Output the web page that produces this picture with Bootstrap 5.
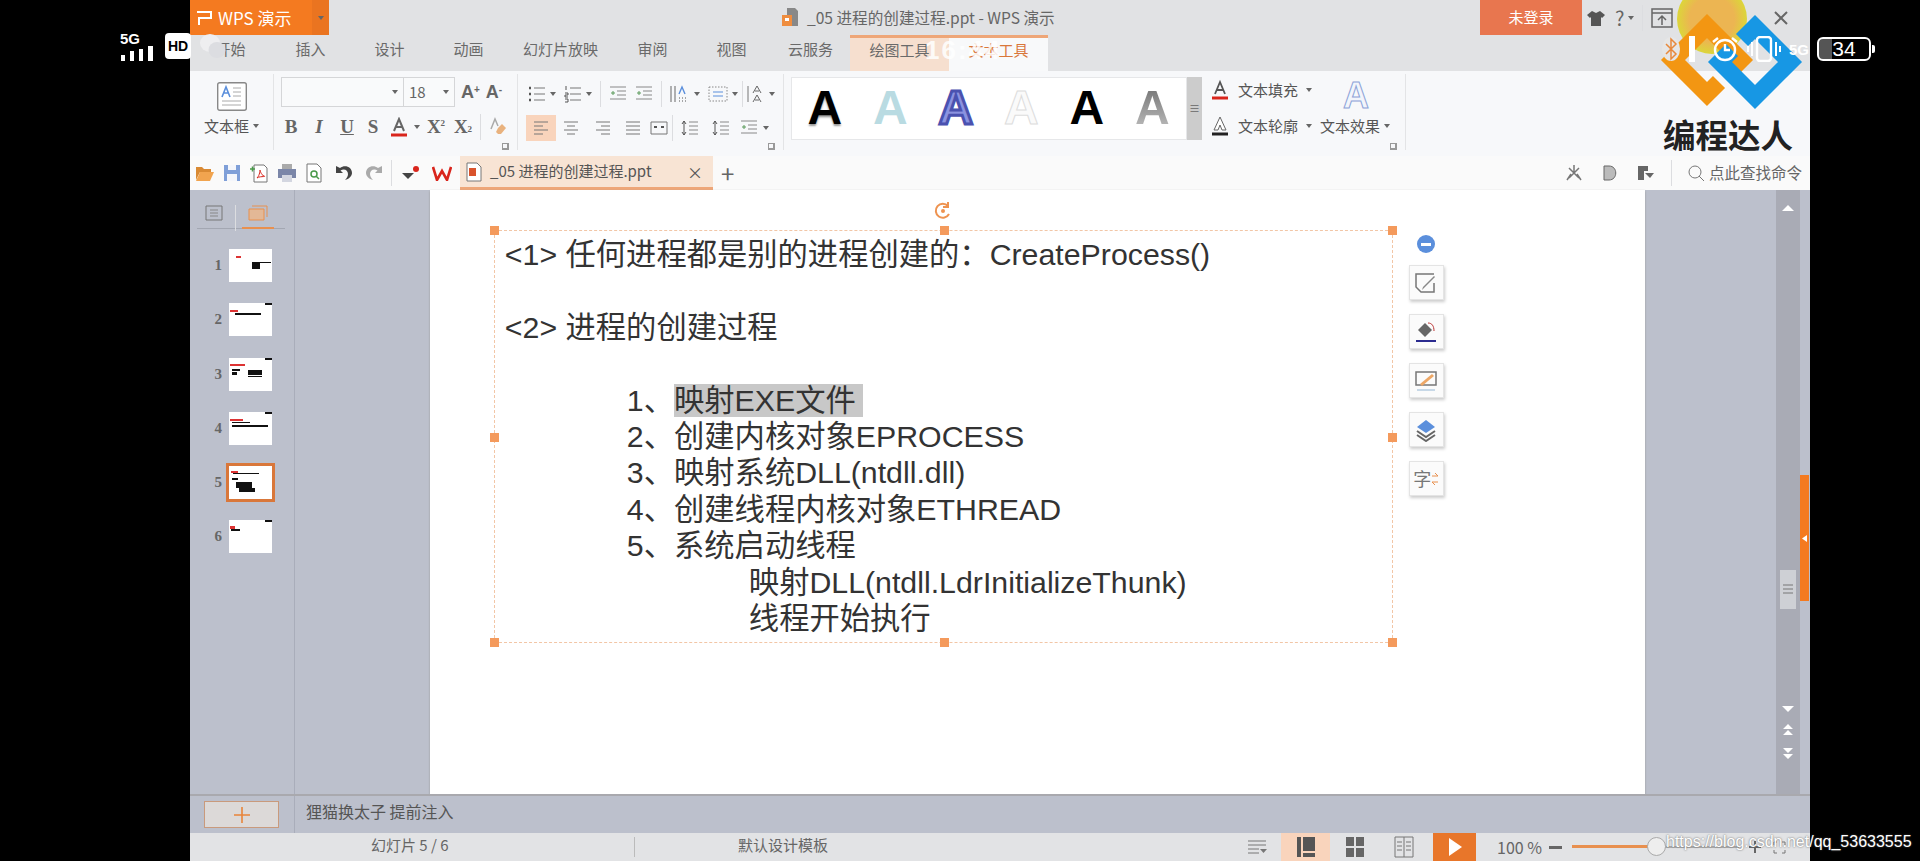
<!DOCTYPE html>
<html lang="zh-CN">
<head>
<meta charset="UTF-8">
<title>_05 进程的创建过程.ppt - WPS 演示</title>
<link href="https://cdn.jsdelivr.net/npm/bootstrap@5.3.3/dist/css/bootstrap.min.css" rel="stylesheet">
<style>
html, body { height: 100%; }
body { background: #000; font-family: "Noto Sans CJK SC", "Liberation Sans", sans-serif; font-size: 14px; color: #666; overflow: hidden; position: relative; }
svg { display: block; flex: none; }
.app { width: 1620px; height: 861px; margin-left: 190px; background: #e2e3e5; }
.titlebar { height: 71px; background: #e1e2e4; }
.toprow { height: 35px; }
.wps-btn { width: 139px; height: 35px; background: #f47a20; color: #fff; font-size: 17px; }
.wps-main { width: 122px; padding-left: 6px; white-space: nowrap; }
.wps-arrow { width: 17px; background: #ea7420; justify-content: center; }
.doc-title { margin-left: 452px; width: 274px; color: #666; font-size: 15.6px; white-space: nowrap; }
.login-btn { width: 102px; height: 35px; background: #e8764f; color: #fff; font-size: 15px; margin-left: 425px; }
.top-tools { width: 228px; }
.shirt { margin-left: 5px; }
.help { font-size: 20px; margin-left: 10px; }
.min-bar { width: 6px; height: 2px; background: #666; margin-left: 23px; }
.max-box { margin-left: 20px; }
.close-x { margin-left: 28px; }
.rtabs { height: 36px; flex-wrap: nowrap; }
.rtab { width: 79px; height: 36px; padding: 3px 0 0; text-align: center; color: #6a6a6a; font-size: 15px; white-space: nowrap; }
.rtab-first { width: 81px; }
.rtab-wide { width: 105px; }
.rtab-tool { width: 99px; border-top: 3px solid #eea678; background: #f6dfcf; padding-top: 1px; }
.rtab-on { background: #f8f9fa; color: #d9773a; }
.ribbon { height: 85px; background: #f7f8fa; }
.rgroup { border-right: 1px solid #e3e4e6; height: 76px; margin-top: 3px; position: relative; }
.g-box { width: 84px; }
.g-font { width: 244px; padding-top: 3px; }
.g-para { width: 266px; padding-top: 5px; }
.g-style { width: 426px; padding: 3px 0 0 7px; border: 0; }
.g-text { width: 196px; padding-top: 1px; }
.rlabel { font-size: 15px; color: #555; white-space: nowrap; }
.rrow { height: 30px; }
.rrow2 { height: 30px; margin-top: 6px; }
.g-para .rrow2 { margin-top: 4px; }
.g-font .rrow2 { margin-top: 5px; }
.fontbox { width: 174px; height: 30px; margin-left: 7px; border: 1px solid #d5d6d8; background: #f9fafb; }
.fontname { width: 122px; border-right: 1px solid #d5d6d8; justify-content: flex-end; padding-right: 5px; }
.fontsize { font-size: 15px; width: 50px; padding-left: 5px; justify-content: space-between; padding-right: 5px; }
.font-grow { margin-left: 6px; font: 700 18px "Liberation Sans", sans-serif; }
.font-grow sup { font-size: 10px; }
.cell { height: 26px; justify-content: center; color: #666; font-family: "Liberation Serif", serif; font-size: 19px; font-weight: 700; }
.c10 { width: 10px; } .c14 { width: 14px; } .c26 { width: 26px; } .c28 { width: 28px; } .c30 { width: 30px; } .c34 { width: 34px; }
.cell sup, .cell sub { font-size: 9px; }
.vsep { width: 1px; height: 26px; background: #dcdde0; flex: none; }
.align-on { background: #f9d4bc; }
.drop { width: 0; height: 0; border-left: 3px solid transparent; border-right: 3px solid transparent; border-top: 4px solid #666; flex: none; }
.expander { position: absolute; right: 8px; bottom: 0; width: 7px; height: 7px; border: 1px solid #999; border-right-width: 2px; border-bottom-width: 2px; }
.gallery { width: 396px; height: 63px; background: #fff; border: 1px solid #e6e7e9; }
.gal-a { width: 65.5px; text-align: center; font: 700 48px/60px "Liberation Sans", sans-serif; }
.a-black { color: #000; text-shadow: 0 2px 2px #999; }
.a-teal { color: #b9dbe2; }
.a-blue { color: #8b93e0; -webkit-text-stroke: 3px #4a52b0; }
.a-white { color: #fafafa; -webkit-text-stroke: 1px #ddd; }
.a-plain { color: #000; }
.a-grey { background: linear-gradient(#666, #ccc); -webkit-background-clip: text; background-clip: text; color: transparent; }
.gal-scroll { width: 15px; height: 63px; background: #ccc; justify-content: center; color: #666; font-size: 11px; }
.a-fx { position: absolute; left: 110px; top: 2px; width: 64px; padding-left: 23px; font: 700 36px/40px "Liberation Sans", sans-serif; color: #f2f5fb; -webkit-text-stroke: 1px #8ca3d8; }
.fx-label { position: absolute; left: 110px; top: 41px; }
.qat { height: 34px; background: #fafafa; }
.qat-icons { padding-left: 5px; width: 212px; }
.doc-tab { width: 253px; height: 34px; background: #f8e4d4; border-bottom: 3px solid #eea678; padding: 0 6px; color: #555; font-size: 15px; white-space: nowrap; }
.qat-right { font-size: 15.5px; color: #666; white-space: nowrap; }
.workspace { height: 604px; background: #bcc0cc; }
.thumbs { width: 105px; border-right: 1px solid #a9adba; }
.thumb-head { height: 39px; margin: 0 9px 0 7px; padding-top: 15px; border-bottom: 1px solid #a3a7b2; position: relative; }
.thumb-mark { position: absolute; left: 45px; width: 32px; bottom: -1px; height: 2px; background: #e8904f; }
.thumb-row { height: 33px; margin-top: 21.3px; justify-content: flex-end; padding-right: 22px; gap: 7px; font: 700 15px "Liberation Serif", serif; color: #666; }
.thumb-head + .thumb-row { margin-top: 20px; }
.thumb-pic { width: 43px; height: 33px; background: #fff; }
.thumb-on { outline: 3px solid #d9773a; outline-offset: 0; }
.slide-gutter { width: 135px; }
.slide { width: 1216px; background: #fff; padding: 40px 0 0 64px; box-shadow: 0 1px 2px #999; }
.frame { width: 899px; height: 413px; border: 1px dashed #f2c6a6; padding: 6px 0 0 10px; position: relative; flex: none; font: 30.3px/36.4px "Liberation Sans", "Noto Sans CJK SC", sans-serif; color: #333; white-space: nowrap; }
.lvl2 { padding-left: 122px; }
.lvl3 { padding-left: 244px; }
.hl { background: #c8c8c8; padding: 0 7px 0 0; }
.handle { position: absolute; width: 9px; height: 9px; background: #f49a5c; }
.h-l { left: -5px; } .h-c { left: 445px; } .h-r { right: -5px; }
.h-t { top: -5px; } .h-m { top: 202px; } .h-b { bottom: -5px; }
.rotate { position: absolute; left: 438px; top: -30px; }
.sidetools { margin: 5px 0 0 16px; gap: 14px; align-items: center; }
.minus-dot { width: 18px; height: 18px; border-radius: 50%; background: #5b8fdc; margin-bottom: -2px; justify-content: center; }
.minus-dot span { width: 10px; height: 3px; background: #fff; }
.tool-box { width: 35px; height: 35px; background: #fbfbfb; border: 1px solid #e4e4e4; box-shadow: 1px 2px 3px #ccc; justify-content: center; color: #777; font-size: 18px; }
.gray-right { width: 131px; }
.vscroll { width: 24px; background: #a9abb5; padding-top: 14px; position: relative; }
.vthumb { position: absolute; left: 4px; top: 380px; width: 16px; height: 39px; background: #ced0d5; }
.vbtns-bottom { position: absolute; left: 0; top: 515px; width: 24px; gap: 11px; }
.edge { width: 10px; position: relative; }
.edge-tab { position: absolute; left: 0; top: 285px; width: 9px; height: 126px; background: #f47a20; justify-content: center; }
.notes { height: 39px; background: #bcc0cc; border-top: 2px solid #a9a9ae; }
.notes-add { width: 105px; border-right: 1px solid #a9adba; padding-left: 14px; padding-top: 5px; }
.add-btn { width: 75px; height: 27px; background: #dcd9d8; border: 1px solid #c99a7c; justify-content: center; }
.notes-text { padding: 0 0 8px 11px; font-size: 16px; color: #555; }
.statusbar { height: 28px; background: #e2e3e5; font-size: 15px; color: #666; }
.st-count { width: 444px; padding: 0 0 4px 181px; white-space: nowrap; }
.st-tpl { width: 598px; padding-left: 103px; border-left: 1px solid #bbb; height: 20px; line-height: 16px; white-space: nowrap; }
.st-view { width: 49px; height: 28px; justify-content: center; }
.st-view-on { background: #f9d4bc; }
.st-play { width: 43px; height: 28px; background: #e8762a; justify-content: center; margin-left: 5px; }
.zoom-pct { margin-left: 21px; font-size: 16px; white-space: nowrap; }
.zoom-minus { width: 13px; height: 3px; background: #666; margin-left: 7px; }
.zoom-track { width: 167px; height: 2px; background: #aaa; position: relative; margin-left: 10px; }
.zoom-fill { position: absolute; left: 0; top: -1px; height: 3px; width: 84px; background: #e8904f; }
.zoom-knob { position: absolute; left: 75px; top: -9px; width: 19px; height: 19px; border-radius: 50%; background: #eee; border: 1px solid #aaa; }
.zoom-plus { margin-left: 10px; }
.zoom-full { margin-left: 12px; }
.phone-l, .phone-r, .logo-mark, .logo-name, .cursor-glow, .clock, .watermark { position: absolute; }
.cursor-glow { left: 1677px; top: -16px; width: 70px; height: 70px; border-radius: 50%; background: radial-gradient(circle, #ecb552 0 45%, #dcd53a 70%); }
.logo-mark { left: 1655px; top: 8px; }
.logo-name { left: 1663px; top: 114px; font-size: 32.5px; line-height: 40px; font-weight: 700; color: #222; white-space: nowrap; }
.phone-l { left: 120px; top: 31px; gap: 9px; color: #fff; }
.sig { font: 700 15px/15px "Liberation Sans", sans-serif; }
.hd { width: 26px; height: 26px; background: #fff; border-radius: 4px; color: #000; font: 700 14px/26px "Liberation Sans", sans-serif; text-align: center; }
.clock { left: 925px; top: 33px; color: rgba(255,255,255,.85); font: 700 26px/34px "Liberation Sans", sans-serif; letter-spacing: 2px; }
.phone-r { left: 1661px; top: 36px; gap: 8px; color: #fff; }
.batt { width: 54px; height: 24px; border: 2px solid #fff; border-radius: 6px; color: #fff; font: 21px/20px "Liberation Sans", sans-serif; text-align: center; position: relative; background: linear-gradient(90deg, #555 26%, #000 26%); }
.batt-nub { position: absolute; right: -6px; top: 6px; width: 3px; height: 8px; background: #fff; border-radius: 0 2px 2px 0; }
.watermark { left: 1666px; top: 829px; font: 16px/26px "Liberation Sans", sans-serif; color: #fff; text-shadow: 0 0 2px #555; white-space: nowrap; }
</style>
</head>
<body>
<svg width="0" height="0" class="position-absolute">
  <symbol id="s-list" viewBox="0 0 18 18"><path d="M1 3h2M1 9h2M1 15h2" stroke="#555" stroke-width="2.4"/><path d="M6 3h11M6 9h11M6 15h11" stroke="#777"/></symbol>
  <symbol id="s-num" viewBox="0 0 18 18"><path d="M2 1v4M1 8h3v2H1v2h3M1 14h3v3H1" fill="none" stroke="#555"/><path d="M6 3h11M6 9h11M6 15h11" stroke="#777"/></symbol>
  <symbol id="s-indent" viewBox="0 0 18 18"><path d="M1 2h16M8 6h9M8 10h9M1 14h16" stroke="#888"/><path d="M2 8h4M4 6v4" stroke="#5a9a5a"/></symbol>
  <symbol id="s-left" viewBox="0 0 18 18"><path d="M2 3h14M2 7h9M2 11h14M2 15h9" stroke="#777"/></symbol>
  <symbol id="s-center" viewBox="0 0 18 18"><path d="M2 3h14M5 7h8M2 11h14M5 15h8" stroke="#777"/></symbol>
  <symbol id="s-right" viewBox="0 0 18 18"><path d="M2 3h14M7 7h9M2 11h14M7 15h9" stroke="#777"/></symbol>
  <symbol id="s-just" viewBox="0 0 18 18"><path d="M2 3h14M2 7h14M2 11h14M2 15h14" stroke="#777"/></symbol>
  <symbol id="s-dist" viewBox="0 0 18 18"><path d="M1 3h16M1 15h16M1 3v12M17 3v12" stroke="#777"/><path d="M4 8h3M11 8h3" stroke="#555" stroke-width="2"/></symbol>
  <symbol id="s-space" viewBox="0 0 18 18"><path d="M3 2v14M1 5l2-3 2 3M1 13l2 3 2-3" fill="none" stroke="#555"/><path d="M8 3h9M8 7h9M8 11h9M8 15h9" stroke="#888"/></symbol>
  <symbol id="s-cols" viewBox="0 0 20 18"><path d="M1 1v16M5 1v16" stroke="#666"/><path d="M9 9l3-7 3 7" fill="none" stroke="#5b8fdc" stroke-width="1.400"/><path d="M9 13h1M12 13h1M15 13h1M9 16h1M12 16h1M15 16h1" stroke="#555"/></symbol>
  <symbol id="s-dash" viewBox="0 0 20 18"><path d="M1 2h18v14H1z" fill="none" stroke="#888" stroke-dasharray="1.500 1.500"/><path d="M5 7h10M5 11h10" stroke="#5b8fdc"/></symbol>
  <symbol id="s-aa" viewBox="0 0 18 18"><path d="M1 1v16" stroke="#777"/><path d="M6 8l4-7 4 7M6 17l4-7 4 7M8 6h4M8 15h4" fill="none" stroke="#666"/></symbol>
</svg>

<div class="app d-flex flex-column">
  <header class="titlebar">
    <div class="toprow d-flex align-items-center">
      <div class="wps-btn d-flex">
        <div class="wps-main d-flex align-items-center gap-1">
          <svg width="18" height="18" viewBox="0 0 18 18"><path d="M1 3h14v6H3v7" fill="none" stroke="#fff" stroke-width="2"/></svg>
          <span>WPS 演示</span>
        </div>
        <div class="wps-arrow d-flex align-items-center"><span class="drop"></span></div>
      </div>
      <div class="doc-title d-flex align-items-center gap-2">
        <svg width="18" height="20" viewBox="0 0 18 20"><path d="M6 1h8l3 3v15H6z" fill="#888"/><path d="M1 8h10v11H1z" fill="#ef8d3f"/><path d="M4 11h4v3H4z" fill="#fff"/></svg>
        <span>_05 进程的创建过程.ppt - WPS 演示</span>
      </div>
      <div class="login-btn d-flex align-items-center justify-content-center">未登录</div>
      <div class="top-tools d-flex align-items-center">
        <svg class="shirt" width="18" height="18" viewBox="0 0 18 18"><path d="M5 2l4 2 4-2 5 4-3 3-1-1v9H4V8L3 9 0 6z" fill="#555"/></svg>
        <span class="help">?</span><span class="drop ms-1"></span>
        <span class="vsep ms-2"></span>
        <svg class="ms-2" width="22" height="20" viewBox="0 0 22 20"><path d="M1 1h20v18H1zM1 5h20M11 17V8M7 12l4-4 4 4" fill="none" stroke="#666" stroke-width="1.5"/></svg>
        <span class="vsep ms-2"></span>
        <span class="min-bar"></span>
        <svg class="max-box" width="15" height="14" viewBox="0 0 15 14"><path d="M1 2h13v11H1z" fill="none" stroke="#666" stroke-width="2"/></svg>
        <svg class="close-x" width="14" height="14" viewBox="0 0 14 14"><path d="M1 1l12 12M13 1L1 13" stroke="#666" stroke-width="2"/></svg>
      </div>
    </div>
    <nav class="nav rtabs">
      <a class="nav-link rtab rtab-first">开始</a>
      <a class="nav-link rtab">插入</a>
      <a class="nav-link rtab">设计</a>
      <a class="nav-link rtab">动画</a>
      <a class="nav-link rtab rtab-wide">幻灯片放映</a>
      <a class="nav-link rtab">审阅</a>
      <a class="nav-link rtab">视图</a>
      <a class="nav-link rtab">云服务</a>
      <a class="nav-link rtab rtab-tool">绘图工具</a>
      <a class="nav-link rtab rtab-tool rtab-on">文本工具</a>
    </nav>
  </header>

  <section class="ribbon d-flex">
    <div class="rgroup g-box d-flex flex-column align-items-center pt-2">
      <svg width="30" height="29" viewBox="0 0 30 29"><rect x=".7" y=".7" width="28.6" height="27.6" rx="2" fill="#fff" stroke="#888" stroke-width="1.4"/><path d="M5 15l4-10 4 10M6.500 11h5" fill="none" stroke="#5b8fdc" stroke-width="1.600"/><path d="M16 6h8M16 10h8M16 14h8M5 19h19M5 23h19" stroke="#aaa"/></svg>
      <div class="rlabel d-flex align-items-center gap-1 mt-1">文本框<span class="drop"></span></div>
    </div>
    <div class="rgroup g-font">
      <div class="d-flex align-items-center">
        <div class="fontbox d-flex">
          <div class="fontname d-flex align-items-center"><span class="drop"></span></div>
          <div class="fontsize d-flex align-items-center">18<span class="drop"></span></div>
        </div>
        <span class="font-grow">A<sup>+</sup></span>
        <span class="font-grow">A<sup>-</sup></span>
      </div>
      <div class="rrow2 d-flex align-items-center">
        <div class="cell c26 d-flex align-items-center ms-1">B</div>
        <div class="cell c30 d-flex align-items-center fst-italic">I</div>
        <div class="cell c26 d-flex align-items-center text-decoration-underline">U</div>
        <div class="cell c26 d-flex align-items-center">S</div>
        <div class="cell c26 d-flex align-items-center">
          <svg width="18" height="20" viewBox="0 0 18 20"><path d="M4 14L9 2l5 12M6 10h6" fill="none" stroke="#666" stroke-width="2"/><path d="M1 18h16" stroke="#d9251c" stroke-width="3"/></svg>
        </div>
        <div class="cell c10 d-flex align-items-center"><span class="drop"></span></div>
        <div class="cell c28 d-flex align-items-center">X<sup>2</sup></div>
        <div class="cell c26 d-flex align-items-center">X<sub>2</sub></div>
        <span class="vsep ms-1"></span>
        <div class="cell c26 d-flex align-items-center ms-1">
          <svg width="20" height="20" viewBox="0 0 20 20"><path d="M3 12L7 2l3 7" fill="none" stroke="#aaa" stroke-width="1.500"/><path d="M10 11l4-4 4 4-5 6h-3l-2-2z" fill="#e9b27e"/></svg>
        </div>
      </div>
      <span class="expander"></span>
    </div>
    <div class="rgroup g-para">
      <div class="rrow d-flex align-items-center">
        <div class="c10"></div>
        <svg width="18" height="18"><use href="#s-list"/></svg><span class="drop ms-1"></span>
        <svg class="ms-2" width="18" height="18"><use href="#s-num"/></svg><span class="drop ms-1"></span>
        <span class="vsep ms-2"></span>
        <svg class="ms-2" width="18" height="18"><use href="#s-indent"/></svg>
        <svg class="ms-2" width="18" height="18"><use href="#s-indent"/></svg>
        <span class="vsep ms-2"></span>
        <svg class="ms-2" width="20" height="18"><use href="#s-cols"/></svg><span class="drop ms-1"></span>
        <svg class="ms-2" width="20" height="18"><use href="#s-dash"/></svg><span class="drop ms-1"></span>
        <span class="vsep ms-1"></span>
        <svg class="ms-1" width="18" height="18"><use href="#s-aa"/></svg><span class="drop ms-1"></span>
      </div>
      <div class="rrow2 d-flex align-items-center">
        <div class="cell c30 d-flex align-items-center align-on ms-2"><svg width="18" height="18"><use href="#s-left"/></svg></div>
        <div class="cell c30 d-flex align-items-center"><svg width="18" height="18"><use href="#s-center"/></svg></div>
        <div class="cell c34 d-flex align-items-center"><svg width="18" height="18"><use href="#s-right"/></svg></div>
        <div class="cell c26 d-flex align-items-center"><svg width="18" height="18"><use href="#s-just"/></svg></div>
        <div class="cell c26 d-flex align-items-center"><svg width="18" height="18"><use href="#s-dist"/></svg></div>
        <span class="vsep"></span>
        <div class="cell c34 d-flex align-items-center"><svg width="18" height="18"><use href="#s-space"/></svg></div>
        <div class="cell c28 d-flex align-items-center"><svg width="18" height="18"><use href="#s-space"/></svg></div>
        <div class="cell c28 d-flex align-items-center"><svg width="18" height="18"><use href="#s-indent"/></svg></div>
        <span class="drop"></span>
      </div>
      <span class="expander"></span>
    </div>
    <div class="rgroup g-style d-flex">
      <div class="gallery d-flex">
        <span class="gal-a a-black">A</span>
        <span class="gal-a a-teal">A</span>
        <span class="gal-a a-blue">A</span>
        <span class="gal-a a-white">A</span>
        <span class="gal-a a-plain">A</span>
        <span class="gal-a a-grey">A</span>
      </div>
      <div class="gal-scroll d-flex align-items-center">≡</div>
    </div>
    <div class="rgroup g-text">
      <div class="rrow d-flex align-items-center gap-2 rlabel">
        <svg width="20" height="22" viewBox="0 0 20 22"><path d="M5 15L10 3l5 12M7 11h6" fill="none" stroke="#555" stroke-width="1.800"/><path d="M2 19h16" stroke="#d9251c" stroke-width="3"/></svg>
        文本填充<span class="drop"></span>
      </div>
      <div class="rrow2 d-flex align-items-center gap-2 rlabel">
        <svg width="20" height="22" viewBox="0 0 20 22"><path d="M4 15L10 2l6 13h-4l-2-5-2 5z" fill="#fff" stroke="#666"/><path d="M2 19h16" stroke="#222" stroke-width="3"/></svg>
        文本轮廓<span class="drop"></span>
      </div>
      <div class="a-fx">A</div>
      <div class="fx-label rlabel d-flex align-items-center gap-1">文本效果<span class="drop"></span></div>
      <span class="expander"></span>
    </div>
  </section>

  <section class="qat d-flex align-items-center">
    <div class="qat-icons d-flex align-items-center gap-2">
      <svg width="20" height="18" viewBox="0 0 20 18"><path d="M1 3h6l2 2h7v3H5L1 16z" fill="#d98a34"/><path d="M5 8h14l-4 9H1z" fill="#f1a44f"/></svg>
      <svg width="18" height="18" viewBox="0 0 18 18"><path d="M1 1h16v16H1z" fill="#7f9fd8"/><path d="M5 1h8v5H5zM4 10h10v7H4z" fill="#f4f6fb"/></svg>
      <svg width="20" height="20" viewBox="0 0 20 20"><path d="M5 2h10l3 3v14H5z" fill="#fff" stroke="#777"/><path d="M8 15c3-3 3-8 3-8s1 5 4 6-5 0-7 2z" fill="none" stroke="#d9251c"/><path d="M1 6h5M3.500 3.500v5" stroke="#4a9a4a" stroke-width="1.500"/></svg>
      <svg width="20" height="20" viewBox="0 0 20 20"><path d="M5 1h10v5H5z" fill="#aaa"/><path d="M1 6h18v9H1z" fill="#7b86a8"/><path d="M5 12h10v7H5z" fill="#d3d6e0"/></svg>
      <svg width="18" height="20" viewBox="0 0 18 20"><path d="M2 1h10l4 4v14H2z" fill="#fff" stroke="#777"/><circle cx="9" cy="11" r="3" fill="none" stroke="#4a9a4a" stroke-width="1.500"/><path d="M11 13l3 3" stroke="#4a9a4a" stroke-width="1.500"/></svg>
      <svg class="ms-1" width="18" height="16" viewBox="0 0 18 16"><path d="M1 1v7h7L5.500 5.500C9 3 13 5 13 9c0 2-1 4-3 6 4-1 7-4 7-7 0-6-7-9-12-5z" fill="#444"/></svg>
      <svg class="ms-1" width="18" height="16" viewBox="0 0 18 16"><path d="M17 1v7h-7l2.500-2.500C9 3 5 5 5 9c0 2 1 4 3 6-4-1-7-4-7-7 0-6 7-9 12-5z" fill="#aaa"/></svg>
      <span class="vsep"></span>
    </div>
    <svg width="18" height="14" viewBox="0 0 18 14" class="me-2"><path d="M0 7h12l-6 6z" fill="#444"/><circle cx="14" cy="3" r="3" fill="#d9251c"/></svg>
    <svg width="20" height="15" viewBox="0 0 20 15" class="ms-1 me-2"><path d="M1 1l4 13 5-9 5 9 4-13" fill="none" stroke="#d9251c" stroke-width="2.600"/></svg>
    <div class="doc-tab d-flex align-items-center">
      <svg width="16" height="20" viewBox="0 0 16 20" class="me-1"><path d="M1 1h10l4 4v14H1z" fill="#fff" stroke="#777"/><path d="M3 6h7v8H3z" fill="#d9532c"/></svg>
      <span class="ms-1">_05 进程的创建过程.ppt</span>
      <span class="ms-auto me-1 fs-6">×</span>
    </div>
    <span class="ms-2 fs-4 lh-1">+</span>
    <div class="qat-right d-flex align-items-center ms-auto pe-2 gap-3">
      <svg width="18" height="18" viewBox="0 0 18 18"><path d="M9 1v8M4 4l10 10M14 4L4 14M2 16l4-6M16 16l-4-6" stroke="#777" stroke-width="1.500"/></svg>
      <svg class="ms-1" width="14" height="16" viewBox="0 0 14 16"><path d="M1 1h5c9 0 9 14 0 14H1z" fill="#bbb" stroke="#666"/></svg>
      <svg class="ms-1" width="18" height="16" viewBox="0 0 18 16"><path d="M1 1h10v5H7v9H1z" fill="#666"/><path d="M8 8h9l-4 5z" fill="#666"/></svg>
      <span class="vsep"></span>
      <div class="d-flex align-items-center gap-1">
        <svg width="17" height="17" viewBox="0 0 17 17"><circle cx="7" cy="7" r="6" fill="none" stroke="#777"/><path d="M11 11l5 5" stroke="#777"/></svg>
        点此查找命令
      </div>
    </div>
  </section>

  <section class="workspace d-flex">
    <aside class="thumbs">
      <div class="thumb-head d-flex gap-2">
        <svg class="ms-2" width="18" height="16" viewBox="0 0 18 16"><path d="M1 1h16v14H1z" fill="none" stroke="#777"/><path d="M5 5h8M5 8h8M5 11h8" stroke="#888"/></svg>
        <span class="vsep ms-1"></span>
        <svg class="ms-1" width="20" height="16" viewBox="0 0 20 16"><path d="M4 1h15v11" fill="none" stroke="#e8904f"/><path d="M1 4h15v11H1z" fill="#e3b896" stroke="#e8904f"/></svg>
        <span class="thumb-mark"></span>
      </div>
      <div class="thumb-row d-flex align-items-center">1
        <svg class="thumb-pic" viewBox="0 0 43 33"><path d="M7 7h5v2H7z" fill="#d33"/><path d="M23 13h8v7h-8zM31 13h11v1H31z" fill="#111"/></svg>
      </div>
      <div class="thumb-row d-flex align-items-center">2
        <svg class="thumb-pic" viewBox="0 0 43 33"><path d="M36 0h7v2h-7zM6 10h26v2H6z" fill="#111"/><path d="M1 7h8v2H1z" fill="#d33"/></svg>
      </div>
      <div class="thumb-row d-flex align-items-center">3
        <svg class="thumb-pic" viewBox="0 0 43 33"><path d="M36 0h7v2h-7zM3 11h8v2H3zM3 14h5v3H3zM19 12h14v5H19zM19 18h14v1H19z" fill="#111"/><path d="M1 6h15v2H1z" fill="#d33"/></svg>
      </div>
      <div class="thumb-row d-flex align-items-center">4
        <svg class="thumb-pic" viewBox="0 0 43 33"><path d="M36 0h7v2h-7zM3 13h36v2H3zM3 10h18v1H3z" fill="#111"/><path d="M1 7h13v2H1z" fill="#d33"/></svg>
      </div>
      <div class="thumb-row d-flex align-items-center">5
        <svg class="thumb-pic thumb-on" viewBox="0 0 43 33"><path d="M4 7h26v1H4zM3 12h6v2H3zM7 16h16v6H7zM10 22h16v4H10z" fill="#111"/><path d="M2 5h7v2H2z" fill="#d33"/></svg>
      </div>
      <div class="thumb-row d-flex align-items-center">6
        <svg class="thumb-pic" viewBox="0 0 43 33"><path d="M36 0h7v2h-7zM2 9h9v2H2z" fill="#111"/><path d="M1 6h5v3H1z" fill="#d33"/></svg>
      </div>
    </aside>
    <div class="slide-gutter"></div>
    <main class="slide d-flex align-items-start">
      <div class="frame">
        <div>&lt;1&gt; 任何进程都是别的进程创建的：CreateProcess()</div>
        <div>&nbsp;</div>
        <div>&lt;2&gt; 进程的创建过程</div>
        <div>&nbsp;</div>
        <div class="lvl2">1、<span class="hl">映射EXE文件</span></div>
        <div class="lvl2">2、创建内核对象EPROCESS</div>
        <div class="lvl2">3、映射系统DLL(ntdll.dll)</div>
        <div class="lvl2">4、创建线程内核对象ETHREAD</div>
        <div class="lvl2">5、系统启动线程</div>
        <div class="lvl3">映射DLL(ntdll.LdrInitializeThunk)</div>
        <div class="lvl3">线程开始执行</div>
        <span class="handle h-l h-t"></span><span class="handle h-c h-t"></span><span class="handle h-r h-t"></span>
        <span class="handle h-l h-m"></span><span class="handle h-r h-m"></span>
        <span class="handle h-l h-b"></span><span class="handle h-c h-b"></span><span class="handle h-r h-b"></span>
        <svg class="rotate" width="20" height="20" viewBox="0 0 20 20"><path d="M15 5a7 7 0 1 0 1 8M15 1v5h-5" fill="none" stroke="#ee9350" stroke-width="2"/><circle cx="10" cy="10" r="2" fill="#ee9350"/></svg>
      </div>
      <div class="sidetools d-flex flex-column">
        <div class="minus-dot d-flex align-items-center"><span></span></div>
        <div class="tool-box d-flex align-items-center"><svg width="24" height="24" viewBox="0 0 24 24"><path d="M20 12v9H7l-5-5V3h18" fill="none" stroke="#777" stroke-width="1.500"/><path d="M21 6L10 17l-2 2 1-3L20 5z" fill="#888"/></svg></div>
        <div class="tool-box d-flex align-items-center"><svg width="24" height="24" viewBox="0 0 24 24"><path d="M4 10l7-7 7 7-7 7z" fill="#666"/><path d="M14 3c4 0 6 3 6 8" fill="none" stroke="#b33"/><path d="M2 21h20" stroke="#2b2b8f" stroke-width="2"/></svg></div>
        <div class="tool-box d-flex align-items-center"><svg width="24" height="24" viewBox="0 0 24 24"><path d="M2 3h20v13H2z" fill="none" stroke="#777" stroke-width="1.500"/><path d="M6 15L18 5l2 2L8 17z" fill="#eda766"/><path d="M3 21h18" stroke="#b6cde0" stroke-width="1.500"/></svg></div>
        <div class="tool-box d-flex align-items-center"><svg width="22" height="24" viewBox="0 0 22 24"><path d="M11 2l9 7-9 6-9-6z" fill="#5b8fdc"/><path d="M2 13l9 6 9-6M2 17l9 6 9-6" fill="none" stroke="#666" stroke-width="2"/></svg></div>
        <div class="tool-box d-flex align-items-center">字<svg width="8" height="14" viewBox="0 0 8 14"><path d="M1 4h6L4 1M7 10H1l3 3" fill="none" stroke="#e8904f"/></svg></div>
      </div>
    </main>
    <div class="gray-right"></div>
    <div class="vscroll">
      <svg class="mx-auto" width="12" height="8" viewBox="0 0 12 8"><path d="M6 1l6 6H0z" fill="#fff"/></svg>
      <div class="vthumb d-flex flex-column align-items-center justify-content-center gap-1"><svg width="10" height="11" viewBox="0 0 10 11"><path d="M0 1h10M0 5h10M0 9h10" stroke="#777"/></svg></div>
      <div class="vbtns-bottom d-flex flex-column align-items-center">
        <svg width="12" height="8" viewBox="0 0 12 8"><path d="M6 7l6-6H0z" fill="#fff"/></svg>
        <svg width="12" height="12" viewBox="0 0 12 12"><path d="M6 0l5 5H1zM6 6l5 5H1z" fill="#fff"/></svg>
        <svg width="12" height="12" viewBox="0 0 12 12"><path d="M6 6l5-5H1zM6 12l5-5H1z" fill="#fff"/></svg>
      </div>
    </div>
    <div class="edge">
      <div class="edge-tab d-flex align-items-center"><svg width="5" height="7" viewBox="0 0 5 7"><path d="M0 3.500L5 0v7z" fill="#fff"/></svg></div>
    </div>
  </section>

  <section class="notes d-flex">
    <div class="notes-add">
      <div class="add-btn d-flex align-items-center"><svg width="16" height="16" viewBox="0 0 16 16"><path d="M8 0v16M0 8h16" stroke="#e8843a" stroke-width="1.600"/></svg></div>
    </div>
    <div class="notes-text d-flex align-items-center">狸猫换太子 提前注入</div>
  </section>

  <footer class="statusbar d-flex align-items-center">
    <div class="st-count">幻灯片 5 / 6</div>
    <div class="st-tpl">默认设计模板</div>
    <div class="st-view d-flex align-items-center"><svg width="20" height="14" viewBox="0 0 20 14"><path d="M1 1h18M1 5h18M1 9h11M1 13h11" stroke="#777"/><path d="M13 9h7l-3.500 4z" fill="#777"/></svg></div>
    <div class="st-view st-view-on d-flex align-items-center"><svg width="20" height="22" viewBox="0 0 20 22"><path d="M1 1h4v20H1zM7 1h12v14H7zM7 17h12v4H7z" fill="#555"/></svg></div>
    <div class="st-view d-flex align-items-center"><svg width="20" height="22" viewBox="0 0 20 22"><path d="M1 1h8v9H1zM11 1h8v9h-8zM1 12h8v9H1zM11 12h8v9h-8z" fill="#666"/></svg></div>
    <div class="st-view d-flex align-items-center"><svg width="20" height="22" viewBox="0 0 20 22"><path d="M1 1h18v20H1zM10 1v20M3 6h5M3 10h5M3 14h5M12 6h5M12 10h5M12 14h5" fill="none" stroke="#777"/></svg></div>
    <div class="st-play d-flex align-items-center"><svg width="14" height="18" viewBox="0 0 14 18"><path d="M1 0l13 9-13 9z" fill="#fff"/></svg></div>
    <span class="zoom-pct">100 %</span>
    <span class="zoom-minus"></span>
    <div class="zoom-track"><span class="zoom-fill"></span><span class="zoom-knob"></span></div>
    <svg class="zoom-plus" width="12" height="12" viewBox="0 0 12 12"><path d="M6 0v12M0 6h12" stroke="#666" stroke-width="2"/></svg>
    <svg class="zoom-full" width="13" height="13" viewBox="0 0 13 13"><path d="M1 4V1h3M9 1h3v3M12 9v3H9M4 12H1V9" fill="none" stroke="#777"/></svg>
  </footer>
</div>

<div class="cursor-glow"></div>
<svg class="logo-mark" width="154" height="105" viewBox="1655 8 154 105">
  <path d="M1719 82l-12 12-34-34 34-34 34 34-10 10" fill="none" stroke="#f39612" stroke-width="17"/>
  <path d="M1732 50l-12 12 35 35 35-35-35-35-13 13" fill="none" stroke="#1797e4" stroke-width="17"/>
</svg>
<div class="logo-name">编程达人</div>
<div class="clock">16:44</div>

<div class="phone-l d-flex align-items-center">
  <div class="sig">5G
    <svg width="36" height="15" viewBox="0 0 36 15"><path d="M1 9h4v6H1zM10 5h4v10h-4zM19 3h4v12h-4zM28 0h5v15h-5z" fill="#fff"/></svg>
  </div>
  <div class="hd">HD</div>
  <svg width="26" height="26" viewBox="0 0 26 26"><ellipse cx="10" cy="10" rx="10" ry="9" fill="#eeeef0"/><ellipse cx="17" cy="17" rx="8.500" ry="8" fill="#dcdde1"/></svg>
</div>
<div class="phone-r d-flex align-items-center">
  <svg width="20" height="26" viewBox="0 0 20 26"><ellipse cx="10" cy="13" rx="9" ry="12" fill="#e6e6e6"/><path d="M5 8l10 10-5 5V3l5 5L5 18" fill="none" stroke="#e8893c" stroke-width="1.500"/></svg>
  <svg width="6" height="26" viewBox="0 0 6 26"><path d="M0 0h6v26H0z" fill="#fff"/></svg>
  <svg class="ms-2" width="28" height="26" viewBox="0 0 28 26"><circle cx="14" cy="14" r="10" fill="none" stroke="#fff" stroke-width="2.400"/><path d="M14 8v6h5M2 6l5-4M26 6l-5-4" fill="none" stroke="#fff" stroke-width="2.400"/></svg>
  <svg width="34" height="26" viewBox="0 0 34 26"><rect x="10" y="1" width="14" height="24" rx="3" fill="none" stroke="#fff" stroke-width="2.400"/><path d="M5 6v14M1 10v6M29 6v14M33 10v6" stroke="#fff" stroke-width="2"/></svg>
  <div class="sig">5G</div>
  <div class="batt">34<span class="batt-nub"></span></div>
</div>
<div class="watermark">https://blog.csdn.net/qq_53633555</div>
<script src="https://cdn.jsdelivr.net/npm/bootstrap@5.3.3/dist/js/bootstrap.bundle.min.js"></script>
</body>
</html>
